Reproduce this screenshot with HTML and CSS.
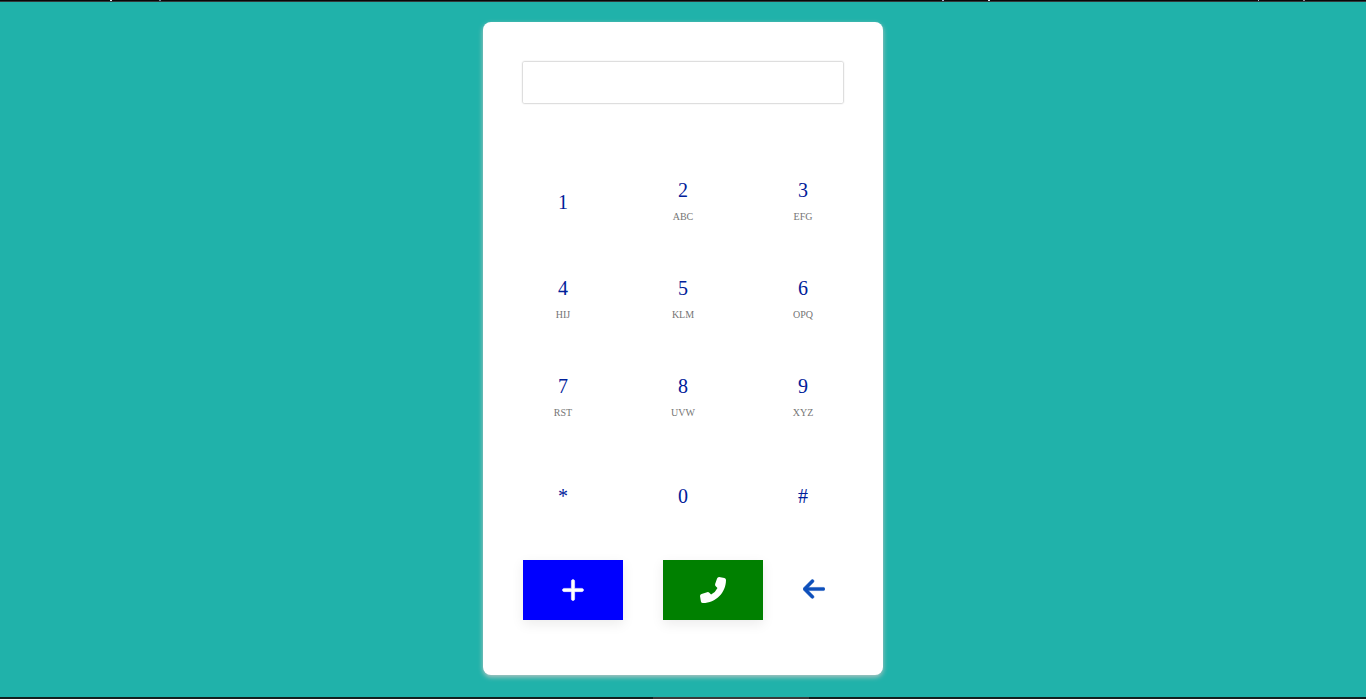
FILE: index.html
```html
<!DOCTYPE html>
<html lang="en">
<head>
<meta charset="utf-8">
<meta name="viewport" content="width=device-width, initial-scale=1">
<title>Dialer</title>
<link rel="stylesheet" href="styles.css">
</head>
<body class="page">
<div class="edge edge-top"></div>
<main class="stage">
  <form class="dialer">
    <input class="display" type="tel" aria-label="Phone number">
    <div class="keypad">
      <button class="key" type="button"><span class="digit">1</span></button>
      <button class="key" type="button"><span class="digit">2</span><span class="letters">ABC</span></button>
      <button class="key" type="button"><span class="digit">3</span><span class="letters">EFG</span></button>
      <button class="key" type="button"><span class="digit">4</span><span class="letters">HIJ</span></button>
      <button class="key" type="button"><span class="digit">5</span><span class="letters">KLM</span></button>
      <button class="key" type="button"><span class="digit">6</span><span class="letters">OPQ</span></button>
      <button class="key" type="button"><span class="digit">7</span><span class="letters">RST</span></button>
      <button class="key" type="button"><span class="digit">8</span><span class="letters">UVW</span></button>
      <button class="key" type="button"><span class="digit">9</span><span class="letters">XYZ</span></button>
      <button class="key" type="button"><span class="digit">*</span></button>
      <button class="key" type="button"><span class="digit">0</span></button>
      <button class="key" type="button"><span class="digit">#</span></button>
    </div>
    <div class="actions">
      <button class="action add" type="button" aria-label="Add contact">
        <svg class="icon icon-bold" viewBox="-32 0 512 512" aria-hidden="true"><path d="M256 80c0-17.700-14.300-32-32-32s-32 14.300-32 32V224H48c-17.700 0-32 14.300-32 32s14.300 32 32 32H192V432c0 17.700 14.300 32 32 32s32-14.300 32-32V288H400c17.700 0 32-14.300 32-32s-14.300-32-32-32H256V80z"/></svg>
      </button>
      <button class="action call" type="button" aria-label="Call">
        <svg class="icon" viewBox="0 0 512 512" aria-hidden="true"><path d="M336 30Q345 0 376 0L480 18Q512 24 512 58C508 312 312 508 58 512Q24 512 18 480L0 376Q0 345 30 336L140 298Q166 290 184 310L218 344Q306 304 344 218L310 184Q290 166 298 140Z"/></svg>
      </button>
      <button class="back" type="button" aria-label="Delete digit">
        <svg class="icon-back icon-bold" viewBox="0 0 448 512" aria-hidden="true"><path d="M9.400 233.400c-12.500 12.500-12.500 32.800 0 45.300l160 160c12.500 12.500 32.800 12.500 45.300 0s12.500-32.800 0-45.300L109.200 288H416c17.700 0 32-14.300 32-32s-14.300-32-32-32H109.300L214.600 118.600c12.500-12.500 12.500-32.800 0-45.300s-32.800-12.500-45.300 0l-160 160z"/></svg>
      </button>
    </div>
  </form>
</main>
<div class="edge edge-bottom"></div>
</body>
</html>
```
FILE: styles.css
```css
* {
  box-sizing: border-box;
}

.page {
  display: flex;
  flex-direction: column;
  min-height: 100vh;
  margin: 0;
  background: #20b2aa;
  font-family: "Liberation Serif", "Times New Roman", serif;
}

.edge {
  height: 2px;
}

.edge-top {
  border-bottom: 1px solid #32393c;
  background: linear-gradient(90deg,
    #090808 110px, #dde4f0 110px 112px,
    #090808 112px 159px, #6f7c94 159px 161px,
    #090808 161px 942px, #a3b4cc 942px 944px,
    #090808 944px 988px, #dde4f0 988px 990px,
    #090808 990px 1258px, #a3b4cc 1258px 1259px,
    #090808 1259px 1303px, #8c8c94 1303px 1305px,
    #090808 1305px);
}

.edge-bottom {
  background: linear-gradient(90deg, #12201f 653px, #3a3a3a 653px 809px, #12201f 809px);
}

.stage {
  display: flex;
  flex: 1;
  justify-content: center;
  align-items: flex-start;
  padding: 20px 0;
}

.dialer {
  width: 400px;
  padding: 40px 40px 55px;
  border-radius: 8px;
  background: #fff;
  box-shadow: 0 2px 5px #b8c4c2;
}

.display {
  display: block;
  width: 100%;
  height: 41px;
  padding: 0 12px;
  border: 0;
  border-radius: 1px;
  outline: 0;
  background: #fff;
  box-shadow: 0 0 2px #808080;
  font: 20px "Liberation Serif", serif;
}

.keypad {
  display: grid;
  grid-template-columns: repeat(3, 80px);
  grid-auto-rows: 58px;
  gap: 40px;
  margin-top: 71px;
}

.key {
  display: flex;
  flex-direction: column;
  justify-content: center;
  align-items: center;
  gap: 6px;
  padding: 0 0 2px;
  border: 0;
  background: none;
  font-family: inherit;
  cursor: pointer;
}

.digit {
  color: #00209a;
  font-size: 20px;
  line-height: 24px;
}

.letters {
  color: #757575;
  font-size: 10px;
  line-height: 18px;
}

.actions {
  display: flex;
  gap: 40px;
  margin-top: 34px;
}

.action {
  display: flex;
  justify-content: center;
  align-items: center;
  width: 100px;
  height: 60px;
  padding: 0 0 1px;
  border: 0;
  color: #fff;
  box-shadow: 0 4px 12px rgba(0, 0, 0, 0.08);
  cursor: pointer;
}

.add {
  background: #00f;
}

.call {
  background: #008000;
}

.icon {
  width: 26px;
  height: 26px;
  fill: currentColor;
}

.icon-bold {
  stroke: currentColor;
  stroke-width: 10;
}

.back {
  display: flex;
  align-items: center;
  padding: 0 0 3px;
  border: 0;
  background: none;
  color: #0d4fbb;
  cursor: pointer;
}

.icon-back {
  width: 22px;
  height: 26px;
  fill: currentColor;
}
```
